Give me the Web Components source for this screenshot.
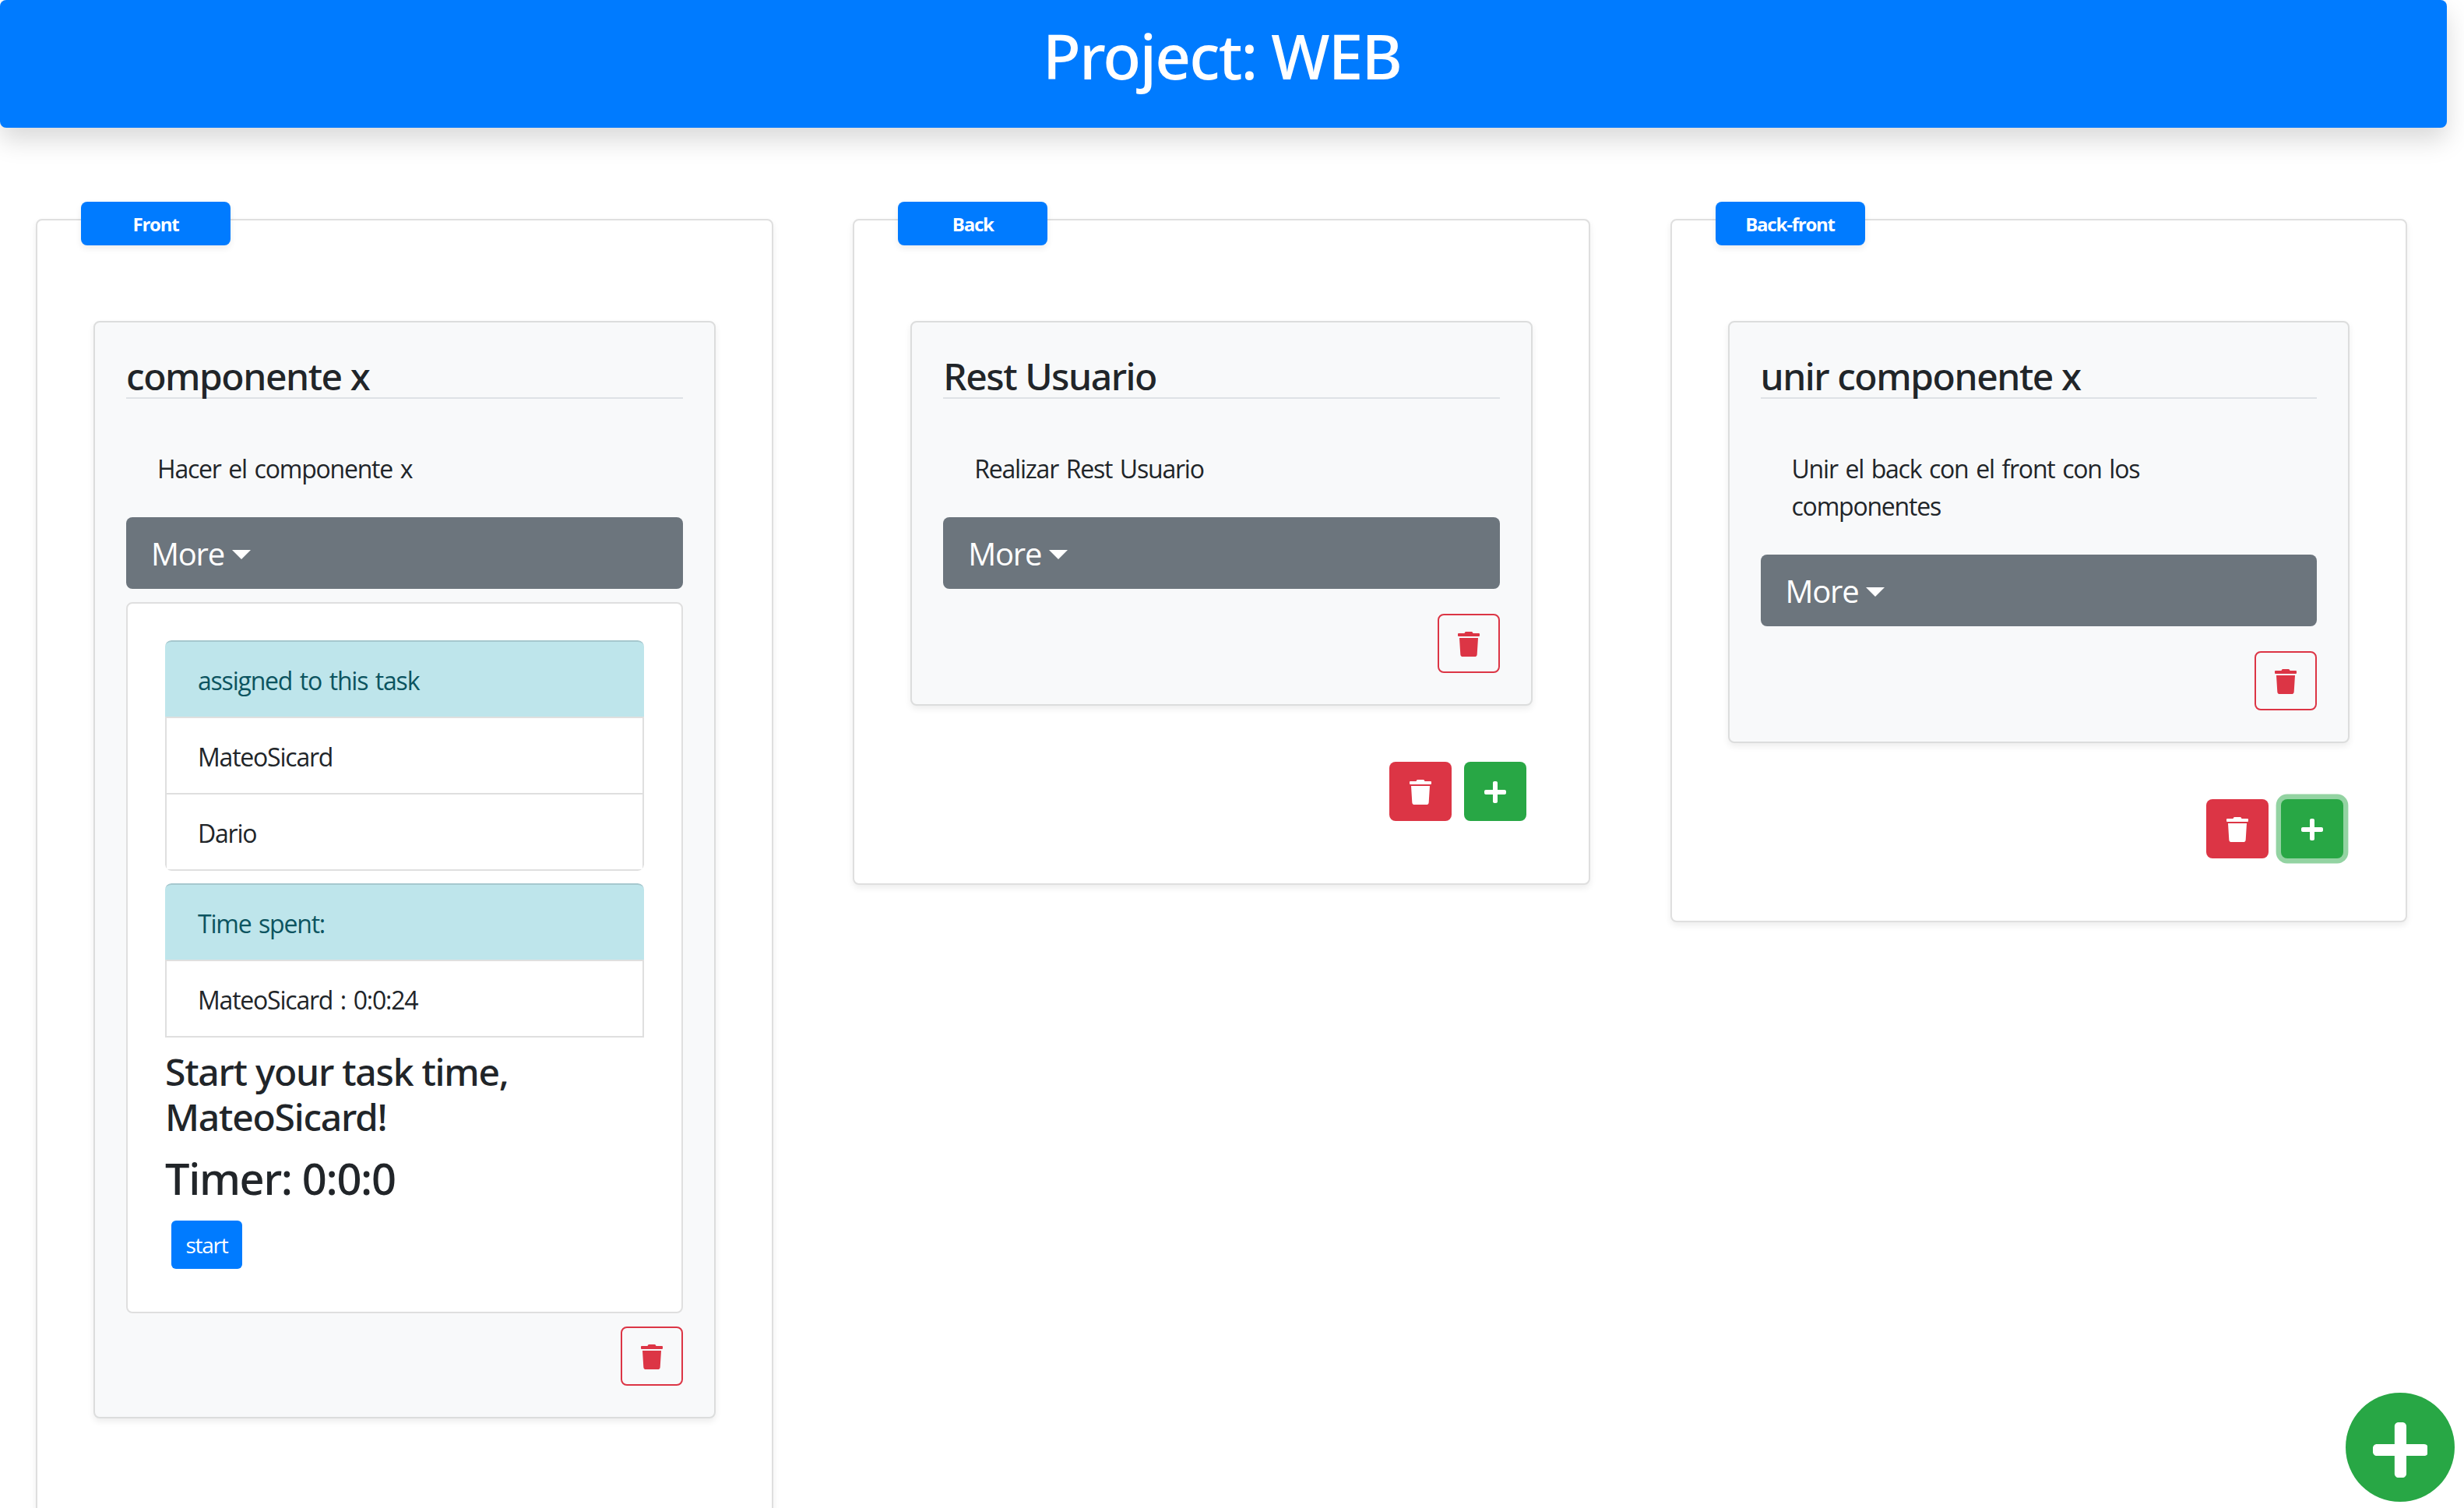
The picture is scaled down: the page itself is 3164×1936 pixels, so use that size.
<!DOCTYPE html>
<html lang="en">
<head>
<meta charset="utf-8">
<title>Project: WEB</title>
<style>
    :root {
        --heading: "Noto Sans", "Open Sans", "Liberation Sans", sans-serif;
    }
    html, body {
        margin: 0;
        height: 100%;
        overflow: hidden;
        background: #fff;
    }
    body {
        font-family: "Open Sans", "Noto Sans", "Liberation Sans", sans-serif;
        font-size: 32px;
        line-height: 1.5;
        color: #212529;
        letter-spacing: -0.038em;
        word-spacing: 0.08em;
    }
</style>
</head>
<body>
<project-header>Project: WEB</project-header>

<task-board>
    <board-column name="Front" tall>
        <task-card name="componente x" open>
            Hacer el componente x
            <task-details slot="details">
                <info-list label="assigned to this task">
                    <info-row>MateoSicard</info-row>
                    <info-row>Dario</info-row>
                </info-list>
                <info-list label="Time spent:" square>
                    <info-row>MateoSicard : 0:0:24</info-row>
                </info-list>
            </task-details>
        </task-card>
    </board-column>

    <board-column name="Back" actions>
        <task-card name="Rest Usuario">Realizar Rest Usuario</task-card>
    </board-column>

    <board-column name="Back-front" actions focused>
        <task-card name="unir componente x">Unir el back con el front con los componentes</task-card>
    </board-column>
</task-board>

<add-fab></add-fab>

<script>
const TRASH = 'M432 32H312l-9.4-18.7A24 24 0 0 0 281.1 0H166.8a23.72 23.72 0 0 0-21.4 13.3L136 32H16A16 16 0 0 0 0 48v32a16 16 0 0 0 16 16h416a16 16 0 0 0 16-16V48a16 16 0 0 0-16-16zM53.2 467a48 48 0 0 0 47.9 45h245.8a48 48 0 0 0 47.9-45L416 128H32z';
const PLUS = 'M416 208H272V64c0-17.67-14.33-32-32-32h-32c-17.67 0-32 14.33-32 32v144H32c-17.67 0-32 14.33-32 32v32c0 17.67 14.33 32 32 32h144v144c0 17.67 14.33 32 32 32h32c17.67 0 32-14.33 32-32V304h144c17.67 0 32-14.33 32-32v-32c0-17.67-14.33-32-32-32z';

const icon = (d, h) => `<svg viewBox="0 0 448 512" height="${h}" width="${h * 0.875}" fill="currentColor" aria-hidden="true"><path d="${d}"/></svg>`;

class ProjectHeader extends HTMLElement {
    constructor() {
        super();
        this.attachShadow({ mode: 'open' });
        this.shadowRoot.innerHTML = `
            <style>
                :host {
                    display: block;
                    width: 3142px;
                    height: 164px;
                    box-sizing: border-box;
                    padding: 23px 4px 0 0;
                    background: #007bff;
                    border-radius: 8px;
                    box-shadow: 0 16px 32px rgba(0, 0, 0, .15);
                    color: #fff;
                    text-align: center;
                    position: relative;
                }
                h1 {
                    margin: 0;
                    font-family: var(--heading);
                    font-size: 80px;
                    font-weight: 500;
                    line-height: 96px;
                    letter-spacing: -0.023em;
                    word-spacing: 0;
                }
            </style>
            <h1><slot></slot></h1>
        `;
    }
}

class TaskBoard extends HTMLElement {
    constructor() {
        super();
        this.attachShadow({ mode: 'open' });
        this.shadowRoot.innerHTML = `
            <style>
                :host {
                    display: grid;
                    grid-template-columns: repeat(3, 946.5px);
                    column-gap: 102.75px;
                    align-items: start;
                    box-sizing: border-box;
                    height: calc(100vh - 164px);
                    overflow: hidden;
                    padding: 117px 0 0 46px;
                }
            </style>
            <slot></slot>
        `;
    }
}

class BoardColumn extends HTMLElement {
    constructor() {
        super();
        this.attachShadow({ mode: 'open' });
    }

    connectedCallback() {
        const actions = this.hasAttribute('actions') ? `
            <div class="actions">
                <icon-button variant="danger"></icon-button>
                <icon-button variant="success" ${this.hasAttribute('focused') ? 'focused' : ''}></icon-button>
            </div>` : '';
        this.shadowRoot.innerHTML = `
            <style>
                :host {
                    display: block;
                    position: relative;
                    box-sizing: border-box;
                    padding: 129px 72px 80px;
                    background: #fff;
                    border: 2px solid #dfdfdf;
                    border-radius: 8px;
                    box-shadow: 0 4px 8px rgba(0, 0, 0, .075);
                }
                :host([tall]) {
                    padding-bottom: 300px;
                }
                .tab {
                    position: absolute;
                    left: 56px;
                    top: -24px;
                    width: 192px;
                    height: 56px;
                    box-sizing: border-box;
                    padding-top: 2px;
                    display: flex;
                    align-items: center;
                    justify-content: center;
                    background: #007bff;
                    color: #fff;
                    border-radius: 8px;
                    font-size: 24px;
                    font-weight: 700;
                    box-shadow: 0 4px 8px rgba(0, 0, 0, .075);
                }
                .actions {
                    display: flex;
                    justify-content: flex-end;
                    gap: 16px;
                    margin-top: 72px;
                    padding-right: 8px;
                }
            </style>
            <div class="tab">${this.getAttribute('name')}</div>
            <slot></slot>
            ${actions}
        `;
    }
}

class TaskCard extends HTMLElement {
    constructor() {
        super();
        this.attachShadow({ mode: 'open' });
    }

    connectedCallback() {
        this.shadowRoot.innerHTML = `
            <style>
                :host {
                    display: block;
                    box-sizing: border-box;
                    padding: 40px;
                    background: #f8f9fa;
                    border: 2px solid #dcdddd;
                    border-radius: 8px;
                    box-shadow: 0 4px 8px rgba(0, 0, 0, .075);
                }
                h4 {
                    margin: 0;
                    height: 56px;
                    font-family: var(--heading);
                    font-size: 48px;
                    font-weight: 500;
                    line-height: 57.6px;
                    letter-spacing: -0.03em;
                    word-spacing: 0;
                    border-bottom: 2px solid #dee2e6;
                }
                p {
                    margin: 66px 0 38px;
                    padding: 0 80px 0 40px;
                }
                .more {
                    display: block;
                    height: 92px;
                    box-sizing: border-box;
                    padding: 17px 32px 0;
                    background: #6c757d;
                    color: #fff;
                    border-radius: 8px;
                    font-size: 40px;
                    line-height: 60px;
                }
                .caret {
                    display: inline-block;
                    margin-left: 10px;
                    vertical-align: 8px;
                    border-top: 12px solid;
                    border-left: 12px solid transparent;
                    border-right: 12px solid transparent;
                }
                .foot {
                    display: flex;
                    justify-content: flex-end;
                    margin-top: 32px;
                }
                ::slotted([slot=details]) {
                    margin-top: 17px;
                }
                :host([open]) .foot {
                    margin-top: 17px;
                }
            </style>
            <h4>${this.getAttribute('name')}</h4>
            <p><slot></slot></p>
            <div class="more">More<span class="caret"></span></div>
            <slot name="details"></slot>
            <div class="foot"><icon-button variant="outline"></icon-button></div>
        `;
    }
}

class TaskDetails extends HTMLElement {
    constructor() {
        super();
        this.attachShadow({ mode: 'open' });
        this.shadowRoot.innerHTML = `
            <style>
                :host {
                    display: block;
                    box-sizing: border-box;
                    padding: 47px 48px 55px;
                    background: #fff;
                    border: 2px solid #dfdfdf;
                    border-radius: 8px;
                }
                h4, h3 {
                    font-family: var(--heading);
                    font-weight: 500;
                    word-spacing: 0;
                }
                h4 {
                    margin: 15px 0 17px;
                    font-size: 48px;
                    line-height: 57.6px;
                    letter-spacing: -0.026em;
                }
                h3 {
                    margin: 0 0 20.6px;
                    font-size: 56px;
                    line-height: 67.2px;
                    letter-spacing: -0.024em;
                }
                .start {
                    display: block;
                    width: 91px;
                    height: 62px;
                    margin-left: 8px;
                    background: #007bff;
                    color: #fff;
                    border-radius: 6px;
                    font-size: 28px;
                    line-height: 62px;
                    text-align: center;
                }
            </style>
            <slot></slot>
            <h4>Start your task time, MateoSicard!</h4>
            <h3>Timer: 0:0:0</h3>
            <div class="start">start</div>
        `;
    }
}

class InfoList extends HTMLElement {
    constructor() {
        super();
        this.attachShadow({ mode: 'open' });
    }

    connectedCallback() {
        this.shadowRoot.innerHTML = `
            <style>
                :host {
                    display: block;
                    margin-bottom: 16px;
                    overflow: hidden;
                    border-radius: 8px;
                    box-sizing: border-box;
                }
                :host(:last-of-type) {
                    margin-bottom: 0;
                }
                :host([square]) {
                    border-radius: 8px 8px 0 0;
                }
                .head {
                    box-sizing: border-box;
                    height: 98px;
                    padding: 26px 42px 0;
                    background: #bee5eb;
                    color: #0c5460;
                    border-top: 2px solid #a6c8ce;
                    border-radius: 8px 8px 0 0;
                }
                .rows {
                    border: 2px solid #dfdfdf;
                    border-top: 0;
                    border-radius: 0 0 8px 8px;
                }
                :host([square]) .rows {
                    border-radius: 0;
                }
            </style>
            <div class="head">${this.getAttribute('label')}</div>
            <div class="rows"><slot></slot></div>
        `;
    }
}

class InfoRow extends HTMLElement {
    constructor() {
        super();
        this.attachShadow({ mode: 'open' });
        this.shadowRoot.innerHTML = `
            <style>
                :host {
                    display: block;
                    box-sizing: border-box;
                    height: 98px;
                    padding: 26px 40px 0;
                    border-top: 2px solid #dfdfdf;
                    background: #fff;
                }
            </style>
            <slot></slot>
        `;
    }
}

class IconButton extends HTMLElement {
    constructor() {
        super();
        this.attachShadow({ mode: 'open' });
    }

    connectedCallback() {
        const path = this.getAttribute('variant') === 'success' ? PLUS : TRASH;
        this.shadowRoot.innerHTML = `
            <style>
                :host {
                    display: flex;
                    align-items: center;
                    justify-content: center;
                    width: 80px;
                    height: 76px;
                    box-sizing: border-box;
                    border-radius: 8px;
                    padding-top: 2px;
                }
                :host([variant=outline]) {
                    border: 2px solid #dc3545;
                    color: #dc3545;
                }
                :host([variant=danger]) {
                    background: #dc3545;
                    color: #fff;
                }
                :host([variant=success]) {
                    background: #28a745;
                    color: #fff;
                }
                :host([focused]) {
                    box-shadow: 0 0 0 6.4px rgba(40, 167, 69, .5);
                }
                svg {
                    display: block;
                }
            </style>
            ${icon(path, 32)}
        `;
    }
}

class AddFab extends HTMLElement {
    constructor() {
        super();
        this.attachShadow({ mode: 'open' });
        this.shadowRoot.innerHTML = `
            <style>
                :host {
                    position: fixed;
                    left: 3012px;
                    top: 1788px;
                    width: 140px;
                    height: 140px;
                    display: flex;
                    align-items: center;
                    justify-content: center;
                    padding-top: 6px;
                    box-sizing: border-box;
                    background: #28a745;
                    color: #fff;
                    border-radius: 50%;
                }
                svg {
                    display: block;
                }
            </style>
            ${icon(PLUS, 81)}
        `;
    }
}

customElements.define('project-header', ProjectHeader);
customElements.define('task-board', TaskBoard);
customElements.define('board-column', BoardColumn);
customElements.define('task-card', TaskCard);
customElements.define('task-details', TaskDetails);
customElements.define('info-list', InfoList);
customElements.define('info-row', InfoRow);
customElements.define('icon-button', IconButton);
customElements.define('add-fab', AddFab);
</script>
</body>
</html>
